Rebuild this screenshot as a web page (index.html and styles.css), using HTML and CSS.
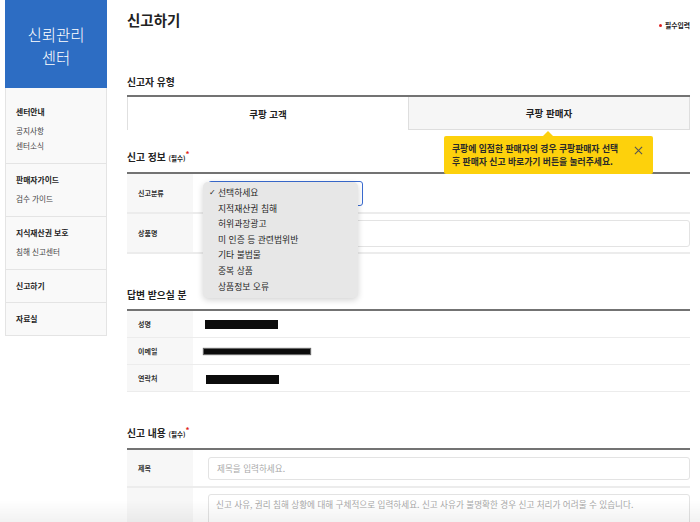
FILE: index.html
```html
<!DOCTYPE html>
<html lang="ko">
<head>
    <meta charset="UTF-8">
    <meta name="viewport" content="width=device-width, initial-scale=1.0">
    <title>신고하기 - 신뢰관리센터</title>
    <link rel="stylesheet" href="styles.css">
</head>
<body>
    <div class="page">
        <aside class="sidebar">
            <div class="brand">신뢰관리<br>센터</div>
            <nav class="nav">
                <div class="nav-group">
                    <p class="nav-title">센터안내</p>
                    <ul class="nav-links">
                        <li>공지사항</li>
                        <li>센터소식</li>
                    </ul>
                </div>
                <div class="nav-group">
                    <p class="nav-title">판매자가이드</p>
                    <ul class="nav-links">
                        <li>검수 가이드</li>
                    </ul>
                </div>
                <div class="nav-group">
                    <p class="nav-title">지식재산권 보호</p>
                    <ul class="nav-links">
                        <li>침해 신고센터</li>
                    </ul>
                </div>
                <div class="nav-group">
                    <p class="nav-title">신고하기</p>
                </div>
                <div class="nav-group">
                    <p class="nav-title">자료실</p>
                </div>
            </nav>
        </aside>

        <main class="content">
            <div class="page-head">
                <h1>신고하기</h1>
                <span class="required-note"><i class="dot"></i>필수입력</span>
            </div>

            <h2 class="section-title type-title">신고자 유형</h2>
            <div class="tabs">
                <button class="tab active">쿠팡 고객</button>
                <button class="tab">쿠팡 판매자</button>
                <div class="tooltip">
                    <p>쿠팡에 입점한 판매자의 경우 쿠팡판매자 선택<br>후 판매자 신고 바로가기 버튼을 눌러주세요.</p>
                    <svg class="tooltip-close" width="9" height="9" viewBox="0 0 10 10">
                        <path d="M1 1L9 9M9 1L1 9" stroke="#555" stroke-width="1.2" fill="none"/>
                    </svg>
                </div>
            </div>

            <h2 class="section-title">신고 정보 <small>(필수)</small><sup>*</sup></h2>
            <div class="form-table">
                <div class="row tall">
                    <div class="label">신고분류</div>
                    <div class="value">
                        <div class="select"></div>
                        <ul class="dropdown">
                            <li class="checked">선택하세요</li>
                            <li>지적재산권 침해</li>
                            <li>허위과장광고</li>
                            <li>미 인증 등 관련법위반</li>
                            <li>기타 불법물</li>
                            <li>중복 상품</li>
                            <li>상품정보 오류</li>
                        </ul>
                    </div>
                </div>
                <div class="row tall">
                    <div class="label">상품명</div>
                    <div class="value"><div class="field"></div></div>
                </div>
            </div>

            <h2 class="section-title">답변 받으실 분</h2>
            <div class="form-table">
                <div class="row short">
                    <div class="label">성명</div>
                    <div class="value"><span class="redact name"></span></div>
                </div>
                <div class="row short">
                    <div class="label">이메일</div>
                    <div class="value"><span class="redact email"></span></div>
                </div>
                <div class="row short">
                    <div class="label">연락처</div>
                    <div class="value"><span class="redact phone"></span></div>
                </div>
            </div>

            <h2 class="section-title">신고 내용 <small>(필수)</small><sup>*</sup></h2>
            <div class="form-table">
                <div class="row subject">
                    <div class="label">제목</div>
                    <div class="value"><div class="field small">제목을 입력하세요.</div></div>
                </div>
                <div class="row body-row">
                    <div class="label"></div>
                    <div class="value"><div class="field area">신고 사유, 권리 침해 상황에 대해 구체적으로 입력하세요. 신고 사유가 불명확한 경우 신고 처리가 어려울 수 있습니다.</div></div>
                </div>
            </div>
        </main>
    </div>
    <div class="bottom-fade"></div>
</body>
</html>
```

FILE: styles.css
```css
:root {
    --brand-color: #2d6dc3;
    --line-strong: #737373;
    --line-light: #ececec;
    --label-bg: #f7f7f7;
    --text-color: #222;
    --placeholder: #a9a9a9;
    --tooltip-bg: #fdd10c;
}
* {
    box-sizing: border-box;
}
body {
    margin: 0;
    font-family: "Noto Sans CJK KR", "Noto Sans", sans-serif;
    color: var(--text-color);
    background: #fff;
    overflow: hidden;
}
.page {
    display: flex;
    gap: 20px;
    padding-left: 5px;
}
.sidebar {
    width: 102px;
    flex-shrink: 0;
}
.brand {
    height: 88px;
    background-color: var(--brand-color);
    color: #fff;
    font-size: 15.5px;
    line-height: 23px;
    font-weight: 300;
    text-align: center;
    display: flex;
    align-items: center;
    justify-content: center;
    padding-top: 3px;
}
.nav {
    background-color: #f9f9f9;
    border: 1px solid #e4e4e4;
    border-top: none;
    padding-top: 8px;
}
.nav-group {
    padding: 8px 10px;
    border-bottom: 1px solid #e4e4e4;
}
.nav-group:last-child {
    border-bottom: none;
}
.nav-title {
    margin: 0;
    font-size: 7.8px;
    line-height: 16px;
    font-weight: 700;
    color: #1e1e1e;
}
.nav-links {
    list-style: none;
    margin: 3px 0 2px;
    padding: 0;
}
.nav-links li {
    font-size: 7.6px;
    line-height: 15px;
    color: #444;
}
.content {
    width: 563px;
}
.page-head {
    display: flex;
    justify-content: space-between;
    padding-top: 8px;
}
.page-head h1 {
    margin: 0;
    font-size: 14.5px;
    line-height: 24px;
    font-weight: 700;
}
.required-note {
    align-self: flex-end;
    margin-bottom: 1px;
    font-size: 6.8px;
    line-height: 12px;
    font-weight: 700;
    display: flex;
    align-items: center;
    gap: 3px;
}
.dot {
    width: 3px;
    height: 3px;
    border-radius: 50%;
    background-color: #e02020;
}
.section-title {
    margin: 33px 0 6px;
    font-size: 9.8px;
    line-height: 16px;
    font-weight: 700;
}
.section-title small {
    font-size: 6.5px;
    font-weight: 700;
}
.section-title sup {
    color: #e02020;
    font-size: 8px;
    vertical-align: 4px;
    line-height: 0;
}
.type-title {
    margin-top: 42px;
    margin-bottom: 5px;
}
.tabs + .section-title {
    margin-top: 19px;
}
.tabs {
    position: relative;
    display: flex;
    border-top: 2px solid var(--line-strong);
}
.tab {
    flex: 1;
    height: 33px;
    border: none;
    background: #fff;
    font-family: inherit;
    font-size: 9.5px;
    font-weight: 700;
    color: #222;
    padding: 0;
}
.tab.active {
    border-left: 1px solid #e0e0e0;
}
.tab:not(.active) {
    background-color: #f6f6f6;
    border: 1px solid #dedede;
    border-top: none;
}
.tooltip {
    position: absolute;
    top: calc(100% + 6px);
    left: 317px;
    width: 209px;
    height: 38px;
    background-color: var(--tooltip-bg);
    border-radius: 2px;
    padding: 6px 8px;
    display: flex;
    justify-content: space-between;
    z-index: 3;
}
.tooltip::before {
    content: "";
    position: absolute;
    top: -5px;
    left: 99px;
    border-left: 5px solid transparent;
    border-right: 5px solid transparent;
    border-bottom: 5px solid var(--tooltip-bg);
}
.tooltip p {
    margin: 0;
    font-size: 8.8px;
    line-height: 13px;
    font-weight: 700;
    color: #2a2a2a;
    white-space: nowrap;
}
.tooltip-close {
    margin-top: 4px;
    margin-right: 2px;
}
.form-table {
    border-top: 2px solid var(--line-strong);
}
.row {
    display: grid;
    grid-template-columns: 66px 1fr;
    border-bottom: 2px solid var(--line-light);
}
.row.tall {
    height: 40px;
}
.row.short {
    height: 27px;
    border-bottom-width: 1px;
}
.row.subject {
    height: 38px;
}
.row.body-row {
    height: 60px;
    border-bottom: none;
}
.label {
    background-color: var(--label-bg);
    padding-left: 11px;
    font-size: 7px;
    font-weight: 700;
    color: #333;
    display: flex;
    align-items: center;
}
.value {
    position: relative;
    padding-left: 15px;
    display: flex;
    align-items: center;
}
.select {
    width: 155px;
    height: 25px;
    border: 1.5px solid #3a6bd0;
    border-radius: 3px;
}
.field {
    flex: 1;
    height: 27px;
    border: 1px solid #e3e3e3;
    border-radius: 3px;
    font-size: 8.6px;
    color: var(--placeholder);
    padding-left: 8px;
    display: flex;
    align-items: center;
}
.field.small {
    height: 23px;
}
.field.area {
    align-self: flex-start;
    margin-top: 6px;
    height: 60px;
    align-items: flex-start;
    padding-left: 7px;
    padding-top: 3px;
}
.dropdown {
    position: absolute;
    top: 8px;
    left: 10px;
    width: 155px;
    height: 116px;
    margin: 0;
    padding: 3px 0 0 15px;
    list-style: none;
    background-color: #e7e7e7;
    border-radius: 5px;
    box-shadow: 0 2px 6px rgba(0, 0, 0, 0.18);
    z-index: 4;
}
.dropdown li {
    position: relative;
    font-size: 8.8px;
    line-height: 15.6px;
    color: #1f1f1f;
}
.dropdown li.checked::before {
    content: "\2713";
    position: absolute;
    left: -9px;
    font-family: "DejaVu Sans", sans-serif;
    font-size: 8px;
}
.redact {
    display: inline-block;
    background-color: #0c0c0c;
}
.redact.name {
    width: 73px;
    height: 9px;
    margin-left: -3px;
    margin-top: 1px;
}
.redact.email {
    width: 106px;
    height: 5px;
    margin-left: -4px;
    box-shadow: 0 0 1px 1px #666;
}
.redact.phone {
    width: 73px;
    height: 9px;
    margin-left: -2px;
    margin-top: 2px;
}
.bottom-fade {
    position: fixed;
    left: 0;
    right: 0;
    bottom: 0;
    height: 22px;
    background: linear-gradient(rgba(0, 0, 0, 0), rgba(0, 0, 0, 0.05));
    pointer-events: none;
}
```
